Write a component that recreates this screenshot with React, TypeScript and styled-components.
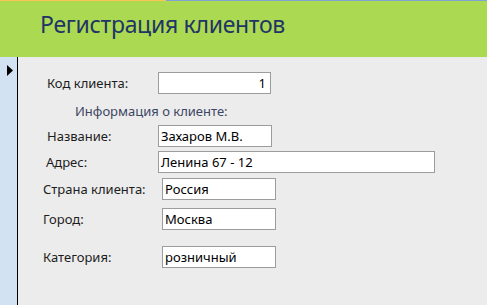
import React from 'react';
import styled, { createGlobalStyle } from 'styled-components';

const GlobalStyle = createGlobalStyle`
  html, body {
    margin: 0;
    padding: 0;
    background: #ececec;
  }
  body {
    font-family: 'Noto Sans', 'Liberation Sans', sans-serif;
  }
`;

const Page = styled.div`
  width: 487px;
  height: 305px;
  display: flex;
  flex-direction: column;
  overflow: hidden;
`;

const Header = styled.div`
  height: 56px;
  border-top: 1px solid;
  border-image: linear-gradient(to right, #f8c658 0, #f8c658 166px, #7fa3d4 166px) 1;
  background: #abda52;
  display: flex;
  align-items: center;
  padding-left: 40px;
`;

const Title = styled.h1`
  margin: 0 0 11px;
  font-size: 23px;
  letter-spacing: -0.3px;
  font-weight: normal;
  color: #223466;
`;

const Body = styled.div`
  flex: 1;
  display: flex;
`;

const Selector = styled.div`
  width: 18px;
  box-sizing: border-box;
  border-right: 1px solid #000;
  background: #d3e2f2;
  padding: 2px 0 0 7px;
`;

const Form = styled.div`
  flex: 1;
  display: flex;
  flex-direction: column;
  padding-top: 15px;
`;

const Row = styled.div<{ $indent: number; $labelWidth: number; $top: number }>`
  display: flex;
  align-items: center;
  margin-top: ${(p) => p.$top}px;
  padding-left: ${(p) => p.$indent}px;

  & > label {
    width: ${(p) => p.$labelWidth}px;
  }
`;

const Label = styled.label`
  font-size: 13px;
  color: #1c1c1c;
`;

const Caption = styled.div`
  margin: 8px 0 0 57px;
  height: 16px;
  font-size: 13px;
  color: #3d4664;
`;

const Field = styled.div<{ $width: number; $align?: string }>`
  width: ${(p) => p.$width}px;
  height: 22px;
  box-sizing: border-box;
  border: 1px solid #9c9c9c;
  background: #fff;
  font-size: 13px;
  line-height: 20px;
  padding: 0 4px 0 2px;
  color: #000;
  text-align: ${(p) => p.$align || 'left'};
`;

function Arrow() {
  return (
    <svg width="7" height="11" viewBox="0 0 7 11">
      <path d="M0 0 L6 5.5 L0 11 Z" fill="#000" />
    </svg>
  );
}

export default function App() {
  return (
    <Page>
      <GlobalStyle />
      <Header>
        <Title>Регистрация клиентов</Title>
      </Header>
      <Body>
        <Selector>
          <Arrow />
        </Selector>
        <Form>
          <Row $indent={29} $labelWidth={111} $top={0}>
            <Label>Код клиента:</Label>
            <Field $width={113} $align="right">1</Field>
          </Row>
          <Caption>Информация о клиенте:</Caption>
          <Row $indent={29} $labelWidth={111} $top={7}>
            <Label>Название:</Label>
            <Field $width={114}>Захаров М.В.</Field>
          </Row>
          <Row $indent={28} $labelWidth={112} $top={4}>
            <Label>Адрес:</Label>
            <Field $width={277}>Ленина 67 - 12</Field>
          </Row>
          <Row $indent={25} $labelWidth={119} $top={5}>
            <Label>Страна клиента:</Label>
            <Field $width={114}>Россия</Field>
          </Row>
          <Row $indent={25} $labelWidth={119} $top={8}>
            <Label>Город:</Label>
            <Field $width={114}>Москва</Field>
          </Row>
          <Row $indent={25} $labelWidth={119} $top={16}>
            <Label>Категория:</Label>
            <Field $width={114}>розничный</Field>
          </Row>
        </Form>
      </Body>
    </Page>
  );
}
